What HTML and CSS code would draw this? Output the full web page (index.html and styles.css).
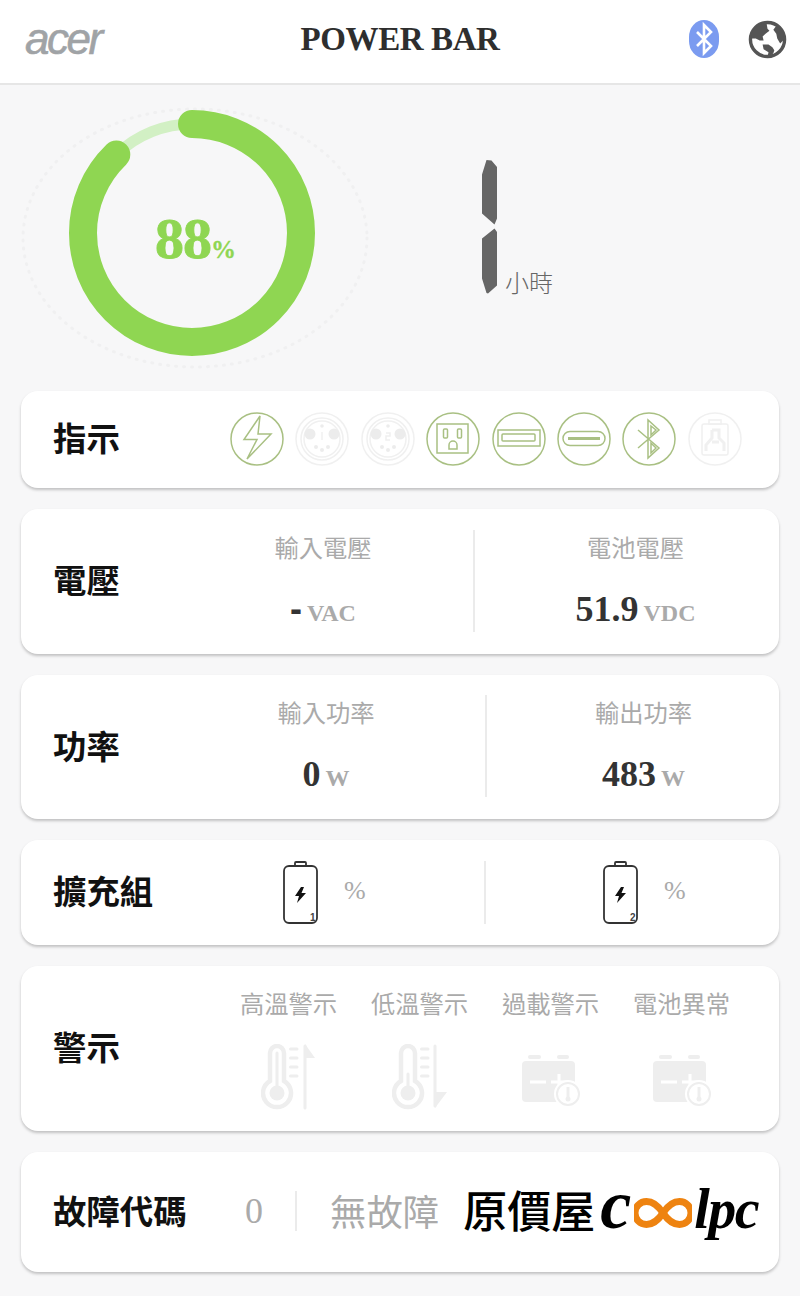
FILE: index.html
```html
<!DOCTYPE html>
<html lang="zh-Hant">
<head>
<meta charset="utf-8">
<title>Power Bar</title>
<link rel="stylesheet" href="styles.css">
</head>
<body>
<header class="topbar">
  <div class="brand">acer</div>
  <h1 class="title">POWER BAR</h1>
  <div class="top-icons">
    <svg class="bt" viewBox="0 0 30 38"><rect width="30" height="38" rx="15" ry="17" fill="#7b9bf0"/><path d="M8 12 L22 26 L15 33 V5 L22 12 L8 26" fill="none" stroke="#fff" stroke-width="2.600"/></svg>
    <svg class="globe" viewBox="0 0 40 40"><circle cx="20" cy="20" r="17.500" fill="#fff" stroke="#555" stroke-width="3.500"/><path d="M19 3 L20 9 L22 11 L18 14 L15 17 L16 21 L12 21 L8 19 L3 19 C3 11 10 3 19 3Z M15 25 L21 25 L25 28 L27 31 L26 34 L23 37 L20 38 L21 33 L16 30Z M29 6 L26 10 L29 14 L30 19 L33 24 L37 20 C37 14 34 9 29 6Z" fill="#555"/></svg>
  </div>
</header>

<section class="hero">
  <svg class="ring" viewBox="0 0 350 266">
    <ellipse cx="175" cy="132" rx="172" ry="129" fill="none" stroke="#f0f0f1" stroke-width="3" stroke-dasharray="1 7" stroke-linecap="round"/>
    <circle cx="172" cy="127" r="109" fill="none" stroke="#d2f0c4" stroke-width="11"/>
    <circle cx="172" cy="127" r="109" fill="none" stroke="#8fd652" stroke-width="28" stroke-linecap="round" pathLength="360" stroke-dasharray="316 360" transform="rotate(-90 172 127)"/>
    <text class="pct" x="135" y="152">88<tspan class="pct-unit">%</tspan></text>
  </svg>
  <div class="time">
    <svg class="digit" viewBox="0 0 16 134"><path d="M4.500 0 L9.500 .5 L15 7 V58.500 L12.500 64.500 L0 53.500 V14.500Z M12.500 68.500 L15 72 V125.500 L6 133.500 L4.500 133 L0 118.500 V78.500Z" fill="#666"/></svg>
    <span class="time-unit">小時</span>
  </div>
</section>

<main class="cards">
  <section class="card card-ind">
    <h2 class="label label-ind">指示</h2>
    <div class="ind-row">
      <svg class="ind on" viewBox="0 0 54 54"><circle cx="27" cy="27" r="26"/><path d="M30 4 L14 27.500 H27 L17 47 L41 22 H28Z"/></svg>
      <svg class="ind off" viewBox="0 0 54 54"><circle cx="27" cy="27" r="26"/><circle cx="27" cy="27" r="21"/><circle cx="27" cy="27" r="18"/><circle class="fill" cx="15" cy="22" r="5.500"/><circle class="fill" cx="39" cy="22" r="5.500"/><circle class="fill" cx="27" cy="14" r="1.800"/><circle class="fill" cx="21" cy="35" r="2"/><circle class="fill" cx="33" cy="35" r="2"/><circle class="fill" cx="27" cy="38" r="2"/><path d="M27 20 V28"/></svg>
      <svg class="ind off" viewBox="0 0 54 54"><circle cx="27" cy="27" r="26"/><circle cx="27" cy="27" r="21"/><circle cx="27" cy="27" r="18"/><circle class="fill" cx="15" cy="22" r="5.500"/><circle class="fill" cx="39" cy="22" r="5.500"/><circle class="fill" cx="27" cy="14" r="1.800"/><circle class="fill" cx="21" cy="35" r="2"/><circle class="fill" cx="33" cy="35" r="2"/><circle class="fill" cx="27" cy="38" r="2"/><path d="M25 21 H29 V24 H25 V28 H29"/></svg>
      <svg class="ind on" viewBox="0 0 54 54"><circle cx="27" cy="27" r="26"/><rect x="11" y="12" width="31" height="29"/><rect x="17.500" y="17" width="4" height="9" rx="1"/><rect x="31.500" y="17" width="4" height="9" rx="1"/><path d="M23 37 V33 A4 4 0 0 1 31 33 V37Z"/></svg>
      <svg class="ind on" viewBox="0 0 54 54"><circle cx="27" cy="27" r="26"/><rect x="6" y="18" width="42" height="16"/><rect x="10" y="22" width="33" height="7" rx="1"/></svg>
      <svg class="ind on" viewBox="0 0 54 54"><circle cx="27" cy="27" r="26"/><rect x="6" y="19.500" width="42" height="14" rx="7"/><path class="thick" d="M11 26.500 H43"/></svg>
      <svg class="ind on" viewBox="0 0 54 54"><circle cx="27" cy="27" r="26"/><path d="M16 18 L37 36 L26 46 V8 L37 18 L16 36"/><path d="M29 14 L34 18 L29 23Z M29 31 L34 36 L29 41Z"/></svg>
      <svg class="ind off" viewBox="0 0 54 54"><circle cx="27" cy="27" r="26"/><rect x="14" y="12" width="26" height="31" rx="2"/><rect x="21" y="8" width="12" height="4"/><path class="thick" d="M24 18 H31 V26 L36 31 V39 M24 18 V26 L18 33 V39 M24 30 H31"/></svg>
    </div>
  </section>

  <section class="card card-volt">
    <h2 class="label label-pair">電壓</h2>
    <div class="pair pair-volt">
      <div class="metric metric-left">
        <div class="metric-name">輸入電壓</div>
        <div class="metric-value"><b class="dash">-</b><span>VAC</span></div>
      </div>
      <div class="metric metric-right">
        <div class="metric-name">電池電壓</div>
        <div class="metric-value"><b>51.9</b><span>VDC</span></div>
      </div>
    </div>
  </section>

  <section class="card card-power">
    <h2 class="label label-pair-b">功率</h2>
    <div class="pair pair-power">
      <div class="metric metric-left">
        <div class="metric-name">輸入功率</div>
        <div class="metric-value"><b>0</b><span>W</span></div>
      </div>
      <div class="metric metric-right">
        <div class="metric-name">輸出功率</div>
        <div class="metric-value"><b>483</b><span>W</span></div>
      </div>
    </div>
  </section>

  <section class="card card-pack">
    <h2 class="label label-pack">擴充組</h2>
    <div class="pack pack-left">
      <svg class="cell" viewBox="0 0 35 64"><rect x="1" y="5" width="33" height="57" rx="5" fill="none" stroke="#333" stroke-width="1.800"/><path d="M12 5 V2 Q12 1 13 1 H22 Q23 1 23 2 V5" fill="none" stroke="#333" stroke-width="1.800"/><path d="M18 26 L12 35 H16 L14 42 L23 32 H18.500 L21 26Z" fill="#111"/><text class="cell-no" x="27" y="60">1</text></svg>
      <span class="pack-pct">%</span>
    </div>
    <div class="pack pack-right">
      <svg class="cell" viewBox="0 0 35 64"><rect x="1" y="5" width="33" height="57" rx="5" fill="none" stroke="#333" stroke-width="1.800"/><path d="M12 5 V2 Q12 1 13 1 H22 Q23 1 23 2 V5" fill="none" stroke="#333" stroke-width="1.800"/><path d="M18 26 L12 35 H16 L14 42 L23 32 H18.500 L21 26Z" fill="#111"/><text class="cell-no" x="27" y="60">2</text></svg>
      <span class="pack-pct">%</span>
    </div>
  </section>

  <section class="card card-warn">
    <h2 class="label label-warn">警示</h2>
    <div class="warn-grid">
      <div class="warn">
        <div class="metric-name">高溫警示</div>
        <svg class="warn-icon" viewBox="0 0 56 66"><path class="therm" d="M9 37 V9 A7 7 0 0 1 23 9 V37 A14 14 0 1 1 9 37Z"/><circle class="wfill" cx="16" cy="49" r="7.500"/><path class="wline" d="M16 9 V42"/><path class="wline" d="M29.500 5 H36 M29.500 14 H36 M29.500 23 H36 M29.500 32 H36"/><path class="wline" d="M44 2 V64"/><path class="wfill" d="M44 0 L54 14 H44Z"/></svg>
      </div>
      <div class="warn">
        <div class="metric-name">低溫警示</div>
        <svg class="warn-icon" viewBox="0 0 56 66"><path class="therm" d="M9 37 V9 A7 7 0 0 1 23 9 V37 A14 14 0 1 1 9 37Z"/><circle class="wfill" cx="16" cy="49" r="7.500"/><path class="wline" d="M16 30 V42"/><path class="wline" d="M29.500 5 H36 M29.500 14 H36 M29.500 23 H36 M29.500 32 H36"/><path class="wline" d="M43 2 V62"/><path class="wfill" d="M43 48 H55 L43 64Z"/></svg>
      </div>
      <div class="warn">
        <div class="metric-name">過載警示</div>
        <svg class="warn-icon warn-batt" viewBox="0 0 62 66"><rect class="wfill" x="6" y="11" width="13" height="4" rx="2"/><rect class="wfill" x="35" y="11" width="12" height="4" rx="2"/><rect class="wfill" x="0" y="17" width="53" height="41" rx="4"/><path class="wcut" d="M8 38 H24 M29 38 H45 M37 30 V46"/><circle class="bubble" cx="46" cy="50" r="14"/><circle class="bubble-in" cx="46" cy="50" r="11"/><path class="wline-thin" d="M46 43 V54"/><circle class="wfill" cx="46" cy="55" r="2.500"/></svg>
      </div>
      <div class="warn">
        <div class="metric-name">電池異常</div>
        <svg class="warn-icon warn-batt" viewBox="0 0 62 66"><rect class="wfill" x="6" y="11" width="13" height="4" rx="2"/><rect class="wfill" x="35" y="11" width="12" height="4" rx="2"/><rect class="wfill" x="0" y="17" width="53" height="41" rx="4"/><path class="wcut" d="M8 38 H24 M29 38 H45 M37 30 V46"/><circle class="bubble" cx="46" cy="50" r="14"/><circle class="bubble-in" cx="46" cy="50" r="11"/><path class="wline-thin" d="M46 43 V54"/><circle class="wfill" cx="46" cy="55" r="2.500"/></svg>
      </div>
    </div>
  </section>

  <section class="card card-fault">
    <h2 class="label label-fault">故障代碼</h2>
    <span class="fault-code">0</span>
    <span class="fault-text">無故障</span>
    <div class="coolpc">
      <span class="coolpc-cn">原價屋</span><span class="coolpc-c">c</span><svg class="coolpc-inf" viewBox="0 0 58 30"><path d="M29 15 C23 6 17 3.500 12.500 3.500 A11.500 11.500 0 0 0 12.500 26.500 C17 26.500 23 24 29 15 C35 6 41 3.500 45.500 3.500 A11.500 11.500 0 0 1 45.500 26.500 C41 26.500 35 24 29 15Z" fill="none" stroke="#ee8310" stroke-width="7"/></svg><span class="coolpc-l">lpc</span>
    </div>
  </section>
</main>
</body>
</html>
```
FILE: styles.css
```css
* { box-sizing: border-box; }
html, body { margin: 0; padding: 0; }
body {
  width: 800px;
  height: 1296px;
  overflow: hidden;
  background: #f7f7f8;
  font-family: "Noto Sans CJK TC", "Liberation Sans", sans-serif;
  color: #333;
}

/* top bar */
.topbar {
  height: 85px;
  background: #fff;
  border-bottom: 2px solid #e6e6e6;
  display: grid;
  grid-template-columns: 1fr auto 1fr;
  align-items: center;
  padding: 0 13px 5px;
}
.brand {
  font: italic 400 44px/1 "Liberation Sans", sans-serif;
  letter-spacing: -2.500px;
  color: #a0a3a6;
  -webkit-text-stroke: .6px #a0a3a6;
  padding-left: 12px;
}
.title {
  margin: 0;
  font: 700 33px/1 "Liberation Serif", serif;
  color: #2e2e2e;
  letter-spacing: -.4px;
}
.top-icons { display: flex; justify-content: flex-end; align-items: center; gap: 29px; }
.bt { width: 30px; height: 38px; }
.globe { width: 39px; height: 39px; }

/* hero */
.hero { height: 306px; display: flex; padding: 21px 0 0 20px; }
.ring { width: 350px; height: 266px; flex: none; }
.pct { font: 700 58px "Liberation Serif", serif; fill: #8fd652; stroke: #8fd652; stroke-width: .8px; letter-spacing: -1px; }
.pct-unit { font-size: 25px; letter-spacing: 0; stroke-width: .3px; }
.time { display: flex; align-items: flex-end; margin: 52px 0 0 112px; height: 136px; }
.digit { width: 16px; height: 134px; flex: none; }
.time-unit { font-size: 24px; line-height: 30px; color: #666; margin: 0 0 -3px 7px; font-weight: 300; }

/* cards */
.cards { display: flex; flex-direction: column; gap: 21px; padding: 0 21px; }
.card {
  background: #fff;
  border-radius: 17px;
  box-shadow: 0 2px 3px rgba(0, 0, 0, .22);
  display: flex;
  align-items: center;
  padding-left: 32px;
}
.card-ind { height: 97px; }
.card-volt, .card-power { height: 145px; }
.card-power { height: 144px; }
.card-pack { height: 105px; }
.card-warn { height: 165px; }
.card-fault { height: 120px; }

.label { margin: 0 0 5px; font-size: 33.400px; font-weight: 700; line-height: 40px; color: #111; flex: none; }
.label-ind { width: 177px; }
.label-pair { width: 120px; }
.label-pair-b { width: 114px; }
.label-pack { width: 230px; }
.label-warn { width: 170px; }
.label-fault { width: 192px; }

/* indicators */
.ind-row { display: flex; gap: 11.400px; margin-bottom: 2px; }
.ind { width: 54px; height: 54px; flex: none; fill: none; stroke-width: 1.500; }
.ind.on { stroke: #a9c083; }
.ind.off { stroke: #f0f0f0; }
.ind .fill { fill: #ececec; stroke: none; }
.ind .thick { stroke-width: 3; }

/* metric pairs */
.pair { display: grid; flex: 1; height: 102px; align-self: flex-start; }
.pair-volt { grid-template-columns: 300px 1fr; margin-top: 21px; }
.pair-power { grid-template-columns: 318px 1fr; margin-top: 20px; }
.metric { text-align: center; }
.metric-right { border-left: 2px solid #ebebeb; }
.pair-volt .metric-right { padding-left: 17px; }
.pair-power .metric-right { padding-left: 21px; }
.metric-name { font-size: 24.300px; line-height: 34px; color: #aaa; font-weight: 400; }
.metric-value { font-family: "Liberation Serif", serif; font-weight: 700; margin-top: 23px; height: 44px; line-height: 44px; white-space: nowrap; }
.metric-value b { font-size: 36px; color: #333; }
.metric-value b.dash { font-family: "Liberation Sans", sans-serif; }
.metric-value span { font-size: 24px; color: #aaa; margin-left: 5px; }

/* expansion packs */
.pack { display: flex; align-items: center; gap: 26px; height: 63px; }
.pack-left { width: 203px; border-right: 2px solid #ebebeb; }
.pack-right { padding-left: 117px; }
.cell { width: 35px; height: 64px; flex: none; }
.cell-no { font: 700 10px "Liberation Sans", sans-serif; fill: #444; }
.pack-pct { font: 400 26px/1 "Liberation Serif", serif; color: #aaa; margin-top: -3px; }

/* warnings */
.warn-grid { display: grid; grid-template-columns: repeat(4, 131px); }
.warn { display: flex; flex-direction: column; align-items: center; margin-top: -1px; }
.warn-icon { height: 66px; width: 56px; margin-top: 24px; }
.warn-batt { width: 62px; margin-left: 4px; }
.therm { fill: none; stroke: #eee; stroke-width: 4.500; }
.wfill { fill: #eee; }
.wline { fill: none; stroke: #eee; stroke-width: 3; stroke-linecap: round; }
.wcut { fill: none; stroke: #fff; stroke-width: 3; }
.bubble { fill: #fff; }
.bubble-in { fill: #fff; stroke: #eee; stroke-width: 2; }
.wline-thin { stroke: #eee; stroke-width: 3; }

/* fault */
.fault-code { font: 400 36px/1 "Liberation Serif", serif; color: #aaa; width: 52px; padding-right: 18px; border-right: 2px solid #ebebeb; height: 40px; display: flex; align-items: center; margin-bottom: 2px; }
.fault-text { font-size: 36.400px; line-height: 44px; color: #aaa; margin: 0 0 4px 33px; font-weight: 400; flex: none; }
.coolpc { display: flex; align-items: baseline; margin: 0 0 8px 24px; color: #000; height: 56px; }
.coolpc-cn { font-size: 44px; line-height: 50px; font-weight: 500; flex: none; }
.coolpc-c { font: italic 700 70px/50px "Liberation Serif", serif; flex: none; margin-left: 5px; }
.coolpc-inf { width: 58px; height: 30px; flex: none; margin: 0 0 2px 3px; }
.coolpc-l { font: italic 700 56px/50px "Liberation Serif", serif; flex: none; letter-spacing: -1.500px; margin-left: 2px; }
```
